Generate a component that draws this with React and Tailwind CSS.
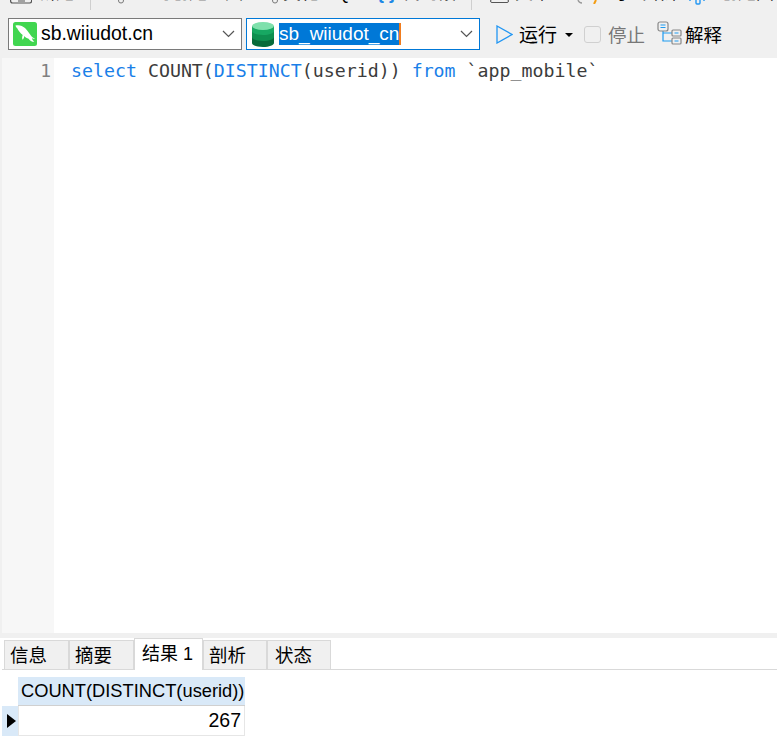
import React from "react";

const uiFont = "font-['Liberation_Sans','Noto_Sans_CJK_SC',sans-serif]";

function Chevron() {
  return (
    <svg width="13" height="8" viewBox="0 0 13 8" fill="none" stroke="#555" strokeWidth="1.2">
      <path d="M1 1l5.5 5.5L12 1" />
    </svg>
  );
}

// the top toolbar is cut off by the window, only the bottom of each label shows
function ClippedBar() {
  return (
    <div className="h-[10px] overflow-hidden flex items-start text-[18px] leading-[24px] text-black whitespace-nowrap [&>*]:shrink-0">
      <svg className="ml-[10px]" width="22" height="4" viewBox="0 0 22 4" fill="none" stroke="#555" strokeWidth="1.2">
        <path d="M.6 0v1q0 2 2 2h17q2 0 2-2V0M8 1h7" />
      </svg>
      <span className="ml-[6px] w-[52px] -mt-[19px]">新建</span>
      <div className="w-[1px] h-[10px] bg-[#cfcfcf]" />
      <svg className="ml-[27px]" width="6" height="4" viewBox="0 0 6 4" fill="none" stroke="#777">
        <path d="M.6 0v1q0 2 2.400 2t2.400-2V0" />
      </svg>
      <span className="ml-[11px] w-[137px] -mt-[19px]">查询创建工具</span>
      <svg width="6" height="4" viewBox="0 0 6 4" fill="none" stroke="#777">
        <path d="M.6 0v1q0 2 2.400 2t2.400-2V0" />
      </svg>
      <span className="ml-[5px] w-[94px] -mt-[19px]">美化 SQL</span>
      <span className="w-[25px] -mt-[19px] text-[#1e88e5] font-bold">{"{ }"}</span>
      <span className="w-[69px] -mt-[19px]">代码段</span>
      <div className="w-[1px] h-[10px] bg-[#cfcfcf]" />
      <span className="ml-[18px] w-[19px] h-[4px] -mt-[1px] rounded-[3px] border border-[#555]" />
      <span className="ml-[6px] w-[62px] -mt-[19px]">文本</span>
      <svg width="22" height="4" viewBox="0 0 22 4" fill="none" strokeWidth="1.400">
        <path d="M1 0q1 3 4 3" stroke="#999" />
        <path d="M19 0l-2 4" stroke="#f39c12" strokeWidth="2" />
      </svg>
      <span className="ml-[12px] w-[78px] -mt-[19px]">导出结果</span>
      <svg width="16" height="5" viewBox="0 0 16 5" fill="none" stroke="#2196f3" strokeWidth="1.400">
        <path d="M1 0v1M7 0v3q0 1 1 1h2q1 0 1-1V0M15 0v1" />
      </svg>
      <span className="ml-[15px] -mt-[19px]">创建图表</span>
    </div>
  );
}

function Dolphin() {
  return (
    <svg width="24" height="24" viewBox="0 0 24 24">
      <rect width="24" height="24" rx="2.500" fill="#41d650" />
      <path
        d="M2.500 3.500c3.500-1 7 .2 9.500 2.500 3 2.700 4.600 6.300 6.600 8.400.9 1 2 1.600 3.400 2-1.100.4-2.100.3-3.100-.1.3 1.400 1.300 2.700 2.500 3.500-2.400.1-4.600-1-5.800-3.100-1.700-.3-3.200-1.300-4.300-2.600-.1 1.500-.6 2.800-1.800 3.700-.6-1.700-.4-3.300.2-4.800-2.400-1.900-4.400-4.400-5.500-6.800-.7-.3-1.300-1.300-1.700-2.700z"
        fill="#fff"
      />
    </svg>
  );
}

function DbIcon() {
  return (
    <svg width="22" height="25" viewBox="0 0 22 25">
      <path d="M0 4v17c0 2.200 4.900 4 11 4s11-1.800 11-4V4z" fill="#076b3b" />
      <path d="M0 4v11c0 2.200 4.900 4 11 4s11-1.800 11-4V4z" fill="#0e8f50" />
      <path d="M0 4v5c0 2.200 4.900 4 11 4s11-1.800 11-4V4z" fill="#17a862" />
      <ellipse cx="11" cy="4" rx="11" ry="4" fill="#7fe0ac" />
    </svg>
  );
}

function PlayIcon() {
  return (
    <svg width="17" height="19" viewBox="0 0 17 19" fill="none" stroke="#2196f3" strokeWidth="1.300">
      <path d="M1 1l15 8.500L1 18z" />
    </svg>
  );
}

function ExplainIcon() {
  return (
    <svg width="25" height="24" viewBox="0 0 25 24" fill="none">
      <path d="M6 10v10h9M6 12h9" stroke="#1e9bf0" strokeWidth="1.200" />
      <rect x="1" y="1" width="10" height="9" rx="2" fill="#f0f0f0" stroke="#888" strokeWidth="1.200" />
      <path d="M3.500 4h5M3.500 6.500h5" stroke="#1e9bf0" />
      <rect x="15" y="9" width="9" height="6" rx="1" fill="#f0f0f0" stroke="#888" strokeWidth="1.200" />
      <path d="M17.500 12h4" stroke="#1e9bf0" />
      <rect x="15" y="17" width="9" height="6" rx="1" fill="#f0f0f0" stroke="#888" strokeWidth="1.200" />
      <path d="M17.500 20h4" stroke="#1e9bf0" />
    </svg>
  );
}

function Toolbar() {
  return (
    <div className="h-[48px] flex items-start pt-[8px] pl-[8px]">
      <div className="w-[234px] h-[32px] bg-white border border-[#7a7a7a] flex items-center pl-[4px] pr-[6px] justify-between">
        <div className="flex items-center gap-[4px]">
          <Dolphin />
          <span className="text-black text-[19.400px]">sb.wiiudot.cn</span>
        </div>
        <Chevron />
      </div>
      <div className="w-[234px] h-[32px] ml-[4px] bg-white border border-[#0078d7] flex items-center pl-[5px] pr-[6px] justify-between">
        <div className="flex items-center gap-[5px]">
          <DbIcon />
          <span className="bg-[#0078d7] text-white text-[19px] leading-[22px] h-[22px] border-r-2 border-[#f07c1e]">sb_wiiudot_cn</span>
        </div>
        <Chevron />
      </div>
      <div className="flex items-center h-[32px] ml-[16px] text-[18px]">
        <PlayIcon />
        <span className="ml-[6px] mt-[3px] text-black text-[19px] leading-[24px]">运行</span>
        <span className="ml-[8px] mt-[2px] w-0 h-0 border-x-[4px] border-x-transparent border-t-[4px] border-t-black" />
        <span className="ml-[11px] w-[17px] h-[17px] rounded-[3px] border border-[#d0d0d0]" />
        <span className="ml-[7px] mt-[3px] text-[#777] text-[18.500px] leading-[24px]">停止</span>
        <span className="ml-[12px] -mt-[2px]"><ExplainIcon /></span>
        <span className="ml-[3px] mt-[3px] text-black text-[18.500px] leading-[24px]">解释</span>
      </div>
    </div>
  );
}

function Editor() {
  return (
    <div className="h-[575px] flex bg-white">
      <div className="w-[2px] bg-[#f0f0f0]" />
      <div className="w-[52px] bg-[#f7f7f7] text-right pr-[3px] text-[#808080] font-['DejaVu_Sans_Mono',monospace] text-[18px] leading-[26px]">1</div>
      <div className="pl-[17px] font-['DejaVu_Sans_Mono',monospace] text-[18.250px] leading-[26px] text-[#3c3c3c] whitespace-pre">
        <span className="text-[#1a7fe8]">select</span> COUNT(<span className="text-[#1a7fe8]">DISTINCT</span>(userid)) <span className="text-[#1a7fe8]">from</span> `app_mobile`
      </div>
    </div>
  );
}

function Tab({ label, className }) {
  return (
    <div className={`h-[30px] -mb-px bg-[#f0f0f0] border border-[#d9d9d9] flex items-center pl-[5px] pt-[2px] text-[18.500px] ${className}`}>
      {label}
    </div>
  );
}

function Results() {
  return (
    <div className="bg-white h-[115px] pl-[2px]">
      <div className="flex items-end h-[32px] pl-[2px] border-b border-[#d9d9d9]">
        <Tab label="信息" className="w-[65px]" />
        <Tab label="摘要" className="w-[65px]" />
        <div className="w-[69px] h-[32px] -mb-px bg-white border-x border-t border-[#d9d9d9] flex items-center pl-[7px] text-[18px]">
          结果 1
        </div>
        <Tab label="剖析" className="w-[64px] pl-[3px]" />
        <Tab label="状态" className="w-[64px] pl-[7px]" />
      </div>
      <div className="mt-[7px] text-[18.300px] text-black">
        <div className="ml-[16px] w-[227px] h-[29px] bg-[#d9e9f8] border-b border-[#d0d0d0] pl-[3px] flex items-center whitespace-nowrap overflow-hidden">
          COUNT(DISTINCT(userid))
        </div>
        <div className="flex h-[30px]">
          <div className="w-[16px] bg-[#d9e9f8] flex items-center pl-[5px]">
            <span className="w-0 h-0 border-y-[7px] border-y-transparent border-l-[9px] border-l-black" />
          </div>
          <div className="w-[227px] bg-white border-x border-b border-[#e6e6e6] pr-[3px] flex items-center justify-end text-[19.500px]">267</div>
        </div>
      </div>
    </div>
  );
}

export default function App() {
  return (
    <div className={`w-[777px] h-[753px] overflow-hidden bg-[#f0f0f0] ${uiFont}`}>
      <ClippedBar />
      <Toolbar />
      <Editor />
      <div className="h-[5px] bg-[#f0f0f0]" />
      <Results />
    </div>
  );
}
